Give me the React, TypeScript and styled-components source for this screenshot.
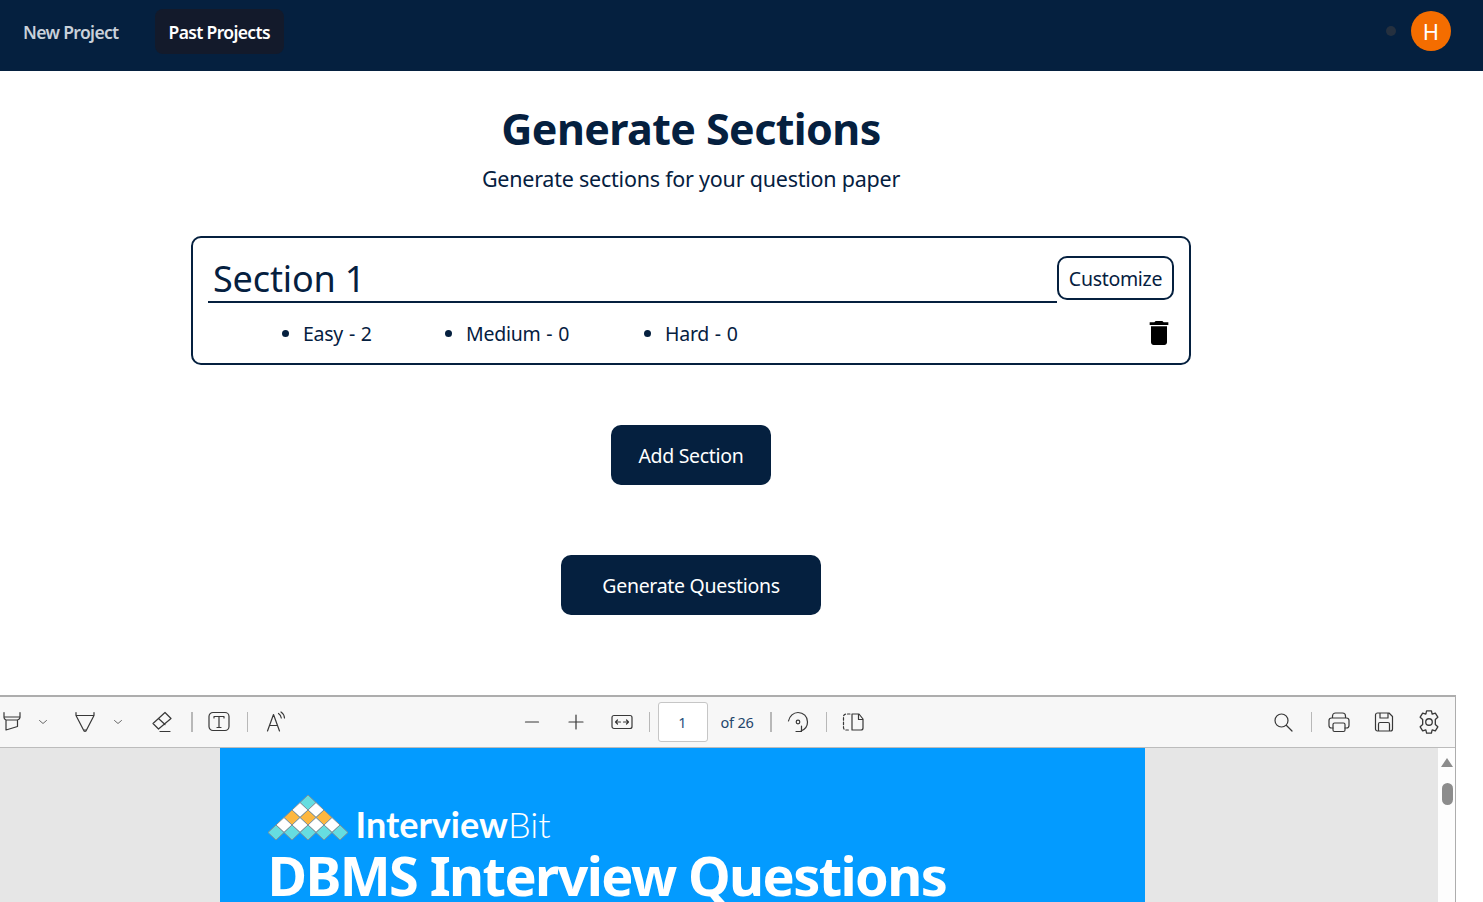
import React from "react";
import styled, { createGlobalStyle } from "styled-components";
import { MdDelete } from "react-icons/md";

const Global = createGlobalStyle`
  html, body { margin: 0; padding: 0; height: 902px; overflow: hidden; background: #fff; }
  * { box-sizing: border-box; }
  body { font-family: "Noto Sans", "Open Sans", sans-serif; color: #05203f; }
`;

const Nav = styled.nav`
  height: 71px; background: #05203f; display: flex; align-items: flex-start; padding: 9px 32px 0 9px;
`;
const NavLink = styled.a<{ $active?: boolean }>`
  height: 45px; display: flex; align-items: center; padding: 0 14px; margin-right: 22px; border-radius: 8px;
  font-size: 17.5px; font-weight: 600; letter-spacing: -0.65px;
  color: ${(p) => (p.$active ? "#ffffff" : "#c9d1da")};
  background: ${(p) => (p.$active ? "#131a2b" : "transparent")};
`;
const NavRight = styled.div`
  margin-left: auto; display: flex; align-items: center; gap: 15px; height: 44px;
`;
const Dot = styled.span`
  width: 10px; height: 10px; border-radius: 50%; background: #25303f;
`;
const Avatar = styled.div`
  width: 40px; height: 40px; border-radius: 50%; background: #f46d00; color: #fff;
  display: flex; align-items: center; justify-content: center; font-size: 22px;
`;

const Main = styled.main`
  width: 1382px; display: flex; flex-direction: column; align-items: center;
`;
const Title = styled.h1`
  margin: 31px 0 0; font-size: 43px; line-height: 54px; font-weight: 700; letter-spacing: -0.6px; color: #05203f;
`;
const Subtitle = styled.p`
  margin: 8px 0 0; font-size: 21.5px; line-height: 30px; letter-spacing: -0.23px; color: #05203f;
`;
const Card = styled.section`
  width: 1000px; height: 129px; margin-top: 42px; border: 2px solid #05203f; border-radius: 10px;
  padding: 18px 15px 0 15px;
`;
const CardTop = styled.div`
  display: flex; align-items: flex-start; height: 46px;
`;
const SectionName = styled.div`
  flex: 1; height: 47px; border-bottom: 2px solid #05203f; padding: 1px 5px 0; font-size: 36px; line-height: 44px;
  letter-spacing: -0.15px; color: #05203f;
`;
const Customize = styled.button`
  width: 117px; height: 44px; border: 2px solid #05203f; border-radius: 10px; background: #fff;
  font-family: inherit; font-size: 19.5px; letter-spacing: -0.3px; color: #05203f; padding: 0;
`;
const CardBottom = styled.div`
  display: flex; align-items: center; height: 34px; margin-top: 14px;
`;
const Levels = styled.ul`
  margin: 0; padding: 0 0 0 74px; list-style: none; display: flex; flex: 1;
`;
const Level = styled.li<{ $w: number }>`
  display: flex; align-items: center; width: ${(p) => p.$w}px; font-size: 19.5px; letter-spacing: -0.25px; word-spacing: 1px; color: #05203f;
  &::before { content: ""; width: 7px; height: 7px; border-radius: 50%; background: #05203f; margin-right: 14px; flex-shrink: 0; }
`;
const Trash = styled.span`
  display: flex; margin-right: -1px; color: #000;
`;
const PrimaryButton = styled.button<{ $w: number; $mt: number }>`
  width: ${(p) => p.$w}px; height: 60px; margin-top: ${(p) => p.$mt}px; border: 0; border-radius: 10px; background: #05203f; color: #fff;
  font-family: inherit; font-size: 19.5px; letter-spacing: -0.3px; padding: 0;
`;

const Viewer = styled.div`
  width: 1529px; flex-shrink: 0; height: 210px; margin-top: 80px; border-top: 2px solid #adadad; border-right: 1px solid #adadad;
  display: flex; flex-direction: column; overflow: hidden;
`;
const Toolbar = styled.div`
  height: 51px; flex-shrink: 0; display: flex; align-items: center; background: #f7f7f7; border-bottom: 1px solid #bcbcbc;
  padding: 0 14px 0 74px; color: #333; font-size: 14px;
`;
const ToolGroup = styled.div<{ $ml?: string }>`
  display: flex; align-items: center; margin-left: ${(p) => p.$ml ?? "0"};
`;
const Tool = styled.span<{ $ml?: number }>`
  width: 24px; height: 24px; display: flex; align-items: center; justify-content: center; flex-shrink: 0;
  margin-left: ${(p) => p.$ml ?? 0}px;
  svg { display: block; fill: none; stroke: #383838; stroke-width: 1.2; stroke-linecap: round; stroke-linejoin: round; }
`;
const Sep = styled.span<{ $ml: number; $w?: number }>`
  width: ${(p) => p.$w ?? 1}px; height: 20px; background: #b8b8b8; margin-left: ${(p) => p.$ml}px; flex-shrink: 0;
`;
const PageInput = styled.div`
  width: 50px; height: 40px; margin-left: 8px; background: #fff; border: 1px solid #c6c6c6; border-radius: 3px;
  display: flex; align-items: center; justify-content: center; font-size: 14.5px; color: #1f4f7a;
`;
const PageCount = styled.span`
  margin-left: 13px; width: 34px; white-space: nowrap; font-size: 14.5px; letter-spacing: -0.2px; color: #24466b;
`;
const ViewerBody = styled.div`
  flex: 1; display: flex; background: #e6e6e6; min-height: 0;
`;
const PageArea = styled.div`
  flex: 1; display: flex; justify-content: center;
`;
const PdfPage = styled.div`
  width: 925px; height: 400px; background: #039bff; padding: 47px 0 0 48px; color: #fff;
`;
const LogoRow = styled.div`
  display: flex; align-items: flex-start; height: 46px;
`;
const LogoText = styled.span`
  margin: 9px 0 0 8px; font-family: "Lato", sans-serif; font-size: 36px; line-height: 41px; font-weight: 700; color: #fff;
`;
const LogoThin = styled.span`
  font-weight: 300;
`;
const PdfTitle = styled.div`
  margin-top: 8px; font-size: 54px; line-height: 52px; font-weight: 700; white-space: nowrap; letter-spacing: -1.6px; color: #fff;
`;
const Scrollbar = styled.div`
  width: 17px; flex-shrink: 0; background: #fdfdfd; display: flex; flex-direction: column; align-items: center; padding: 10px 0 0 2px;
`;
const ScrollUp = styled.span`
  width: 0; height: 0; border-left: 6px solid transparent; border-right: 6px solid transparent; border-bottom: 9px solid #8c8c8c;
`;
const ScrollThumb = styled.span`
  width: 11px; height: 22px; margin-top: 16px; border-radius: 6px; background: #8c8c8c;
`;

const Ico = ({ children }: { children: React.ReactNode }) => (
  <svg width={24} height={24} viewBox="0 0 24 24">{children}</svg>
);
const ChevronTool = styled.span<{ $ml: number }>`
  width: 24px; height: 24px; display: flex; align-items: center; justify-content: center; flex-shrink: 0;
  margin-left: ${(p) => p.$ml}px;
  svg { display: block; fill: none; stroke: #6a6a6a; stroke-width: 1; stroke-linecap: round; stroke-linejoin: round; }
`;
const Chevron = () => <Ico><path d="M8.500 10.500l3.500 3 3.500-3" /></Ico>;

const Logo = () => {
  const rows: [number, number, string[]][] = [
    [40, 7.5, ["#66dde0"]],
    [32, 15, ["#fff", "#fff"]],
    [24, 22.5, ["#fdb73f", "#fdb73f", "#fdb73f"]],
    [16, 30, ["#fff", "#fff", "#fff", "#fff"]],
    [8, 37.5, ["#66dde0", "#66dde0", "#66dde0", "#66dde0", "#66dde0"]],
  ];
  return (
    <svg width="80" height="46" viewBox="0 0 80 46">
      {rows.flatMap(([x0, y, cs], r) =>
        cs.map((c, i) => {
          const x = x0 + i * 16;
          return (
            <polygon key={`${r}-${i}`} points={`${x},${y - 7.5} ${x + 8},${y} ${x},${y + 7.5} ${x - 8},${y}`} fill={c} stroke="#7f9197" strokeWidth="1" />
          );
        })
      )}
    </svg>
  );
};

export default function App() {
  return (
    <>
      <Global />
      <Nav>
        <NavLink>New Project</NavLink>
        <NavLink $active>Past Projects</NavLink>
        <NavRight>
          <Dot />
          <Avatar>H</Avatar>
        </NavRight>
      </Nav>
      <Main>
        <Title>Generate Sections</Title>
        <Subtitle>Generate sections for your question paper</Subtitle>
        <Card>
          <CardTop>
            <SectionName>Section 1</SectionName>
            <Customize>Customize</Customize>
          </CardTop>
          <CardBottom>
            <Levels>
              <Level $w={163}>Easy - 2</Level>
              <Level $w={199}>Medium - 0</Level>
              <Level $w={150}>Hard - 0</Level>
            </Levels>
            <Trash><MdDelete size={32} /></Trash>
          </CardBottom>
        </Card>
        <PrimaryButton $w={160} $mt={60}>Add Section</PrimaryButton>
        <PrimaryButton $w={260} $mt={70}>Generate Questions</PrimaryButton>
        <Viewer>
          <Toolbar>
            <ToolGroup>
              <Tool><Ico><path d="M3 2.500v5c0 1.200.8 2 2 2.500l0 10 11.500-3.500V10c1.200-.5 2.500-1.300 2.500-2.500v-5M3 7h16M5 10h11.500" /></Ico></Tool>
              <ChevronTool $ml={6}><Chevron /></ChevronTool>
              <Tool $ml={18}><Ico><path d="M3 2.500v3l7.500 14.500c.4 2 2.600 2 3 0L21 5.500v-3M3 5.500h18M10.500 20h3" /></Ico></Tool>
              <ChevronTool $ml={9}><Chevron /></ChevronTool>
              <Tool $ml={20}><Ico><path d="M15 2.500L3 13.500l5.500 5.500L21 8.500l-6-6zM8.500 8.500l6.500 6M10 21.500h10" /></Ico></Tool>
              <Sep $ml={17} $w={2} />
              <Tool $ml={14}><Ico><rect x="2" y="2.500" width="20" height="18" rx="4" /><path d="M7 6.500h10M7 6.500v1.500M17 6.500v1.500M12 6.500v11M10 17.500h4" /></Ico></Tool>
              <Sep $ml={16} />
              <Tool $ml={16}><Ico><path d="M3.500 21L9.500 4.500 15.500 21M5.500 15.500h8M14.500 3.500c1.500 1 2.500 2.500 2.800 4.500M17 2c2 1.200 3.300 3.500 3.500 6" /></Ico></Tool>
            </ToolGroup>
            <ToolGroup $ml="232px">
              <Tool><Ico><path d="M5.500 12h13" /></Ico></Tool>
              <Tool $ml={20}><Ico><path d="M5 12h14M12 5v14" /></Ico></Tool>
              <Tool $ml={22}><Ico><rect x="2" y="5.500" width="20" height="13" rx="2" /><path d="M5.500 12h5M5.500 12l2-2M5.500 12l2 2M13.500 12h5M18.500 12l-2-2M18.500 12l-2 2" /></Ico></Tool>
              <Sep $ml={15} />
              <PageInput>1</PageInput>
              <PageCount>of 26</PageCount>
              <Sep $ml={15} $w={2} />
              <Tool $ml={14}><Ico><path d="M2.500 11C3.500 6 7.500 2.500 12 2.500c5.500 0 9.500 4 9.500 9.500 0 4-2.500 7.500-6.500 9M15.500 16v5.500H10" /><circle cx="12" cy="12" r="1.800" /></Ico></Tool>
              <Sep $ml={16} />
              <Tool $ml={14}><Ico><path d="M9 4H5A2.500 2.500 0 0 0 2.500 6.500v11A2.500 2.500 0 0 0 5 20h4" strokeDasharray="2.500 2" /><path d="M11 20V4h7l4 5v9c0 1-1 2-2 2h-9zM17.500 4v5.500H22" /></Ico></Tool>
            </ToolGroup>
            <ToolGroup $ml="auto">
              <Tool><Ico><circle cx="10.500" cy="10.500" r="6.500" /><path d="M15.500 15.500l5.500 5.500" /></Ico></Tool>
              <Sep $ml={16} />
              <Tool $ml={15}><Ico><path d="M6 18H4.500A2.500 2.500 0 0 1 2 15.500v-5A2.500 2.500 0 0 1 4.500 8h15A2.500 2.500 0 0 1 22 10.500v5a2.500 2.500 0 0 1-2.500 2.500H18M5.500 8V6a3 3 0 0 1 3-3h7a3 3 0 0 1 3 3v2" /><rect x="6" y="13" width="12" height="8.500" rx="1.500" /></Ico></Tool>
              <Tool $ml={21}><Ico><path d="M3.500 5A2 2 0 0 1 5.500 3h11.500l3.500 3.500V19a2 2 0 0 1-2 2h-13a2 2 0 0 1-2-2V5zM8 3v5h8V3M6.500 21v-7a1.500 1.500 0 0 1 1.500-1.500h8a1.500 1.500 0 0 1 1.500 1.500v7" /></Ico></Tool>
              <Tool $ml={21}><svg width={24} height={24} viewBox="1 1 22 22"><path d="M9.800 1.800h4.400l.7 3 2.900-1 2.300 3.800-2.300 2.100v4.600l2.300 2.100-2.300 3.800-2.900-1-.7 3H9.800l-.7-3-2.900 1-2.300-3.800 2.300-2.100V9.700L3.900 7.600l2.300-3.800 2.900 1z" /><circle cx="12" cy="12" r="3" /></svg></Tool>
            </ToolGroup>
          </Toolbar>
          <ViewerBody>
            <PageArea>
              <PdfPage>
                <LogoRow>
                  <Logo />
                  <LogoText>Interview<LogoThin>Bit</LogoThin></LogoText>
                </LogoRow>
                <PdfTitle>DBMS Interview Questions</PdfTitle>
              </PdfPage>
            </PageArea>
            <Scrollbar>
              <ScrollUp />
              <ScrollThumb />
            </Scrollbar>
          </ViewerBody>
        </Viewer>
      </Main>
    </>
  );
}
